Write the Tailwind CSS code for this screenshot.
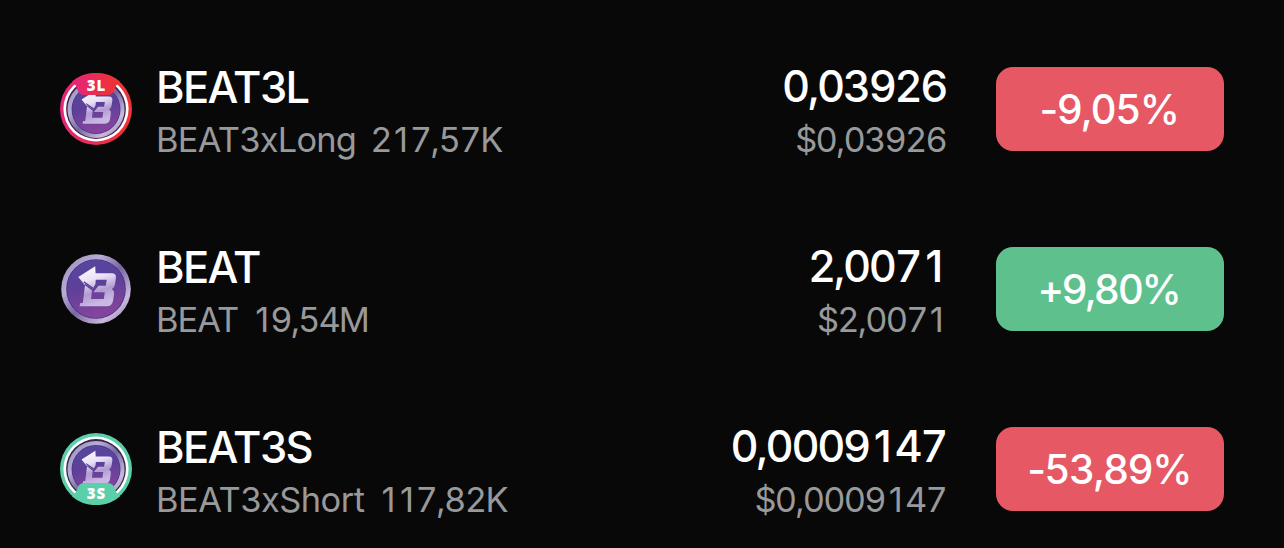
<!DOCTYPE html>
<html lang="en">
<head>
  <meta charset="UTF-8" />
  <meta name="viewport" content="width=device-width, initial-scale=1.0" />
  <title>Markets</title>
  <script src="https://cdn.jsdelivr.net/npm/@tailwindcss/browser@4"></script>
</head>
<body class="bg-[#080808] font-['Inter',sans-serif] text-white h-[548px] overflow-hidden">
  <!-- shared coin artwork -->
  <svg class="absolute size-0" aria-hidden="true">
    <defs>
      <linearGradient id="rim" x1="0" y1="0" x2="1" y2="1">
        <stop offset="0" stop-color="#9388bc" />
        <stop offset=".3" stop-color="#b9add6" />
        <stop offset=".52" stop-color="#7866a2" />
        <stop offset=".78" stop-color="#c9badb" />
        <stop offset="1" stop-color="#8375aa" />
      </linearGradient>
      <linearGradient id="face" x1="0" y1="0" x2="0.2" y2="1">
        <stop offset="0" stop-color="#5548a0" />
        <stop offset=".5" stop-color="#5d4099" />
        <stop offset="1" stop-color="#84449c" />
      </linearGradient>
      <linearGradient id="mark" x1="0" y1="0" x2=".3" y2="1">
        <stop offset="0" stop-color="#ffffff" />
        <stop offset=".4" stop-color="#eae3f6" />
        <stop offset=".72" stop-color="#b29bd2" />
        <stop offset="1" stop-color="#c9b8e2" />
      </linearGradient>
      <linearGradient id="red" x1="0" y1="0" x2="1" y2="0">
        <stop offset="0" stop-color="#e5257a" />
        <stop offset="1" stop-color="#f0342f" />
      </linearGradient>
      <g id="coin">
        <circle cx="46" cy="47" r="34.8" fill="url(#rim)" />
        <circle cx="46" cy="47" r="29.8" fill="#463383" />
        <circle cx="46" cy="47" r="29" fill="url(#face)" />
        <path fill="url(#mark)" fill-rule="evenodd" d="M28.3 35 45.2 24.2 45.6 31.3H61.5Q66.6 31.3 65.9 36L65 42.3Q64.5 46 61.8 47.2 64.6 48.6 64 52.5L63 59Q62 64.3 57 64.3H29.5L30.3 61H32.8L35.2 41.8 42.8 46.8 45.4 42.2 45.8 37.8H56.8L55.8 43.8H48.5L43.4 50.2H54.8L53.8 57H41L42 48.6 35 43.2Z" />
        <path d="M33.8 39.9 43 46.2" stroke="#563f98" stroke-width="1.3" />
      </g>
    </defs>
  </svg>

  <main class="flex flex-col gap-24 px-[60px] pt-[67px]">
    <div class="flex h-[84px] items-start">
      <svg class="mt-[6px] size-[72px] shrink-0" viewBox="10 11 72 72">
        <circle cx="46" cy="47" r="36" fill="url(#red)" />
        <circle cx="46" cy="47" r="32.6" fill="#fff" />
        <circle cx="46" cy="47" r="29.9" fill="#42214f" />
        <use href="#coin" transform="translate(8.3 8.9) scale(.82)" />
        <path fill="url(#red)" d="M22 19.5Q33 10.5 46 11 59 10.5 70 19.5 66 22.5 65 26.5 63.5 33 58 33H34Q28.5 33 27 26.5 26 22.5 22 19.5Z" />
        <text x="46.5" y="29.3" text-anchor="middle" class="fill-white font-['Open_Sans'] text-[15px] font-extrabold tracking-[1px]">3L</text>
      </svg>
      <div class="-mt-[4px] ml-[24px]">
        <div class="text-[43.5px] leading-[48px] font-medium tracking-[-1.6px]">BEAT3L</div>
        <div class="mt-[7px] flex gap-[14px] text-[34.4px] leading-[44px] text-[#98999b]"><span class="tracking-[-0.75px]">BEAT3xLong</span><span class="tabular-nums tracking-[-1.4px]">2<span class="mx-[3px] proportional-nums">1</span>7,57K</span></div>
      </div>
      <div class="-mt-[5px] mr-[2px] ml-auto text-right">
        <div class="text-[43.5px] leading-[48px] font-medium tabular-nums tracking-[-2.4px]">0,03926</div>
        <div class="mt-[8px] text-[34.4px] leading-[44px] text-[#98999b] tabular-nums tracking-[-1.8px]">$0,03926</div>
      </div>
      <div class="ml-[48px] flex h-[84px] w-[228px] items-center justify-center rounded-[17px] bg-[#e55864] pt-[2px] pr-[2px] text-[40.5px] font-medium tabular-nums tracking-[-1.6px]"><span class="proportional-nums">-</span>9,05%</div>
    </div>

    <div class="flex h-[84px] items-start">
      <svg class="mt-[6px] size-[72px] shrink-0" viewBox="10 11 72 72">
        <use href="#coin" />
      </svg>
      <div class="-mt-[4px] ml-[24px]">
        <div class="text-[43.5px] leading-[48px] font-medium tracking-[-1.6px]">BEAT</div>
        <div class="mt-[7px] flex gap-[14px] text-[34.4px] leading-[44px] text-[#98999b]"><span class="tracking-[-1px]">BEAT</span><span class="tabular-nums tracking-[-1.9px]"><span class="mx-[3px] proportional-nums">1</span>9,54M</span></div>
      </div>
      <div class="-mt-[5px] mr-[2px] ml-auto text-right">
        <div class="text-[43.5px] leading-[48px] font-medium tabular-nums tracking-[-2.4px]">2,007<span class="mx-[5px] proportional-nums">1</span></div>
        <div class="mt-[8px] text-[34.4px] leading-[44px] text-[#98999b] tabular-nums tracking-[-1.8px]">$2,007<span class="mr-[4px] ml-[3px] proportional-nums">1</span></div>
      </div>
      <div class="ml-[48px] flex h-[84px] w-[228px] items-center justify-center rounded-[17px] bg-[#5ec08c] pt-[2px] pr-[3px] text-[40.5px] font-medium tabular-nums tracking-[-2.4px]">+9,80%</div>
    </div>

    <div class="flex h-[84px] items-start">
      <svg class="mt-[6px] size-[72px] shrink-0" viewBox="10 11 72 72">
        <circle cx="46" cy="47" r="36" fill="#5bcfaa" />
        <circle cx="46" cy="47" r="32.6" fill="#fff" />
        <circle cx="46" cy="47" r="29.9" fill="#34284d" />
        <use href="#coin" transform="translate(8.3 8.9) scale(.82)" />
        <path fill="#5bcfaa" d="M22 74.5Q33 83.5 46 83 59 83.5 70 74.5 66 71.5 65 67.5 63.5 61 58 61H34Q28.5 61 27 67.5 26 71.5 22 74.5Z" />
        <text x="46.5" y="76.5" text-anchor="middle" class="fill-white font-['Open_Sans'] text-[15px] font-extrabold tracking-[1px]">3S</text>
      </svg>
      <div class="-mt-[4px] ml-[24px]">
        <div class="text-[43.5px] leading-[48px] font-medium tracking-[-1.6px]">BEAT3S</div>
        <div class="mt-[7px] flex gap-[14px] text-[34.4px] leading-[44px] text-[#98999b]"><span class="tracking-[-0.5px]">BEAT3xShort</span><span class="tabular-nums tracking-[-1.5px]"><span class="mx-[3px] proportional-nums">1</span><span class="mx-[3px] proportional-nums">1</span>7,82K</span></div>
      </div>
      <div class="-mt-[5px] mr-[2px] ml-auto text-right">
        <div class="text-[43.5px] leading-[48px] font-medium tabular-nums tracking-[-2.4px]">0,0009<span class="mx-[5px] proportional-nums">1</span>47</div>
        <div class="mt-[8px] text-[34.4px] leading-[44px] text-[#98999b] tabular-nums tracking-[-1.8px]">$0,0009<span class="mr-[4px] ml-[4px] proportional-nums">1</span>47</div>
      </div>
      <div class="ml-[48px] flex h-[84px] w-[228px] items-center justify-center rounded-[17px] bg-[#e55864] pt-[2px] pr-[2px] text-[40.5px] font-medium tabular-nums tracking-[-1.6px]"><span class="proportional-nums">-</span>53,89%</div>
    </div>
  </main>
</body>
</html>
